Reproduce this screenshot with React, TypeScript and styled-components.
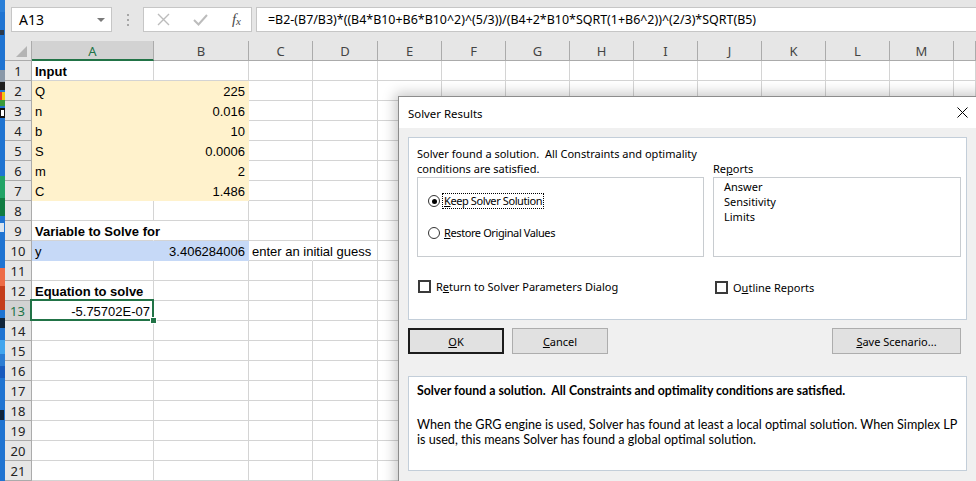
import React from "react";
import styled, { createGlobalStyle } from "styled-components";

const GlobalStyle = createGlobalStyle`
  html, body {
    margin: 0;
    padding: 0;
    width: 976px;
    height: 481px;
    overflow: hidden;
    background: #ffffff;
  }
  #root {
    width: 976px;
    height: 481px;
  }
`;

const GREEN = "#217346";
const YELLOW = "#fff2cc";
const BLUE = "#c6d9f7";
const GRID = "#d4d4d4";

const COLS = ["A", "B", "C", "D", "E", "F", "G", "H", "I", "J", "K", "L", "M", "N"];
const ROWS = Array.from({ length: 21 }, (_, i) => i + 1);

interface CellData {
  text?: string;
  bold?: boolean;
  right?: boolean;
  fill?: string;
  overflow?: boolean;
  selected?: boolean;
}

const cells: Record<string, CellData> = {
  A1: { text: "Input", bold: true },
  A2: { text: "Q", fill: YELLOW },
  B2: { text: "225", right: true, fill: YELLOW },
  A3: { text: "n", fill: YELLOW },
  B3: { text: "0.016", right: true, fill: YELLOW },
  A4: { text: "b", fill: YELLOW },
  B4: { text: "10", right: true, fill: YELLOW },
  A5: { text: "S", fill: YELLOW },
  B5: { text: "0.0006", right: true, fill: YELLOW },
  A6: { text: "m", fill: YELLOW },
  B6: { text: "2", right: true, fill: YELLOW },
  A7: { text: "C", fill: YELLOW },
  B7: { text: "1.486", right: true, fill: YELLOW },
  A9: { text: "Variable to Solve for", bold: true, overflow: true },
  A10: { text: "y", fill: BLUE },
  B10: { text: "3.406284006", right: true, fill: BLUE },
  C10: { text: "enter an initial guess", overflow: true },
  A12: { text: "Equation to solve", bold: true },
  A13: { text: "-5.75702E-07", right: true, selected: true },
};

const Page = styled.div`
  position: relative;
  display: flex;
  width: 976px;
  height: 481px;
  overflow: hidden;
`;

const Desktop = styled.svg`
  flex: 0 0 5px;
  display: block;
`;

const ExcelWindow = styled.div`
  flex: 1;
  display: flex;
  flex-direction: column;
  background: #ffffff;
  min-width: 0;
`;

const Toolbar = styled.div`
  height: 41px;
  flex: 0 0 41px;
  box-sizing: border-box;
  background: #e6e6e6;
  display: flex;
  align-items: flex-start;
  padding: 7px 0 0 6px;
`;

const InputBox = styled.div<{ $width?: number }>`
  box-sizing: border-box;
  height: 25px;
  ${(p) => (p.$width ? `width: ${p.$width}px;` : "flex: 1;")}
  background: #ffffff;
  border: 1px solid #c6c6c6;
  display: flex;
  align-items: center;
  font-family: "Noto Sans", "Open Sans", sans-serif;
  color: #000;
  white-space: nowrap;
  overflow: hidden;
`;

const NameText = styled.span`
  font-size: 14px;
  padding-left: 7px;
  flex: 1;
`;

const DropArrow = styled.span`
  width: 0;
  height: 0;
  border-left: 4px solid transparent;
  border-right: 4px solid transparent;
  border-top: 4px solid #7a7a7a;
  margin-right: 6px;
`;

const Grip = styled.div`
  width: 31px;
  height: 25px;
  display: flex;
  flex-direction: column;
  align-items: center;
  justify-content: center;
  gap: 3px;
  & > span {
    width: 2px;
    height: 2px;
    background: #a6a6a6;
  }
`;

const FxGroup = styled(InputBox)`
  justify-content: space-between;
  padding: 0 10px 0 13px;
`;

const FxText = styled.span`
  font-family: "Liberation Serif", "DejaVu Serif", serif;
  font-style: italic;
  font-size: 15px;
  color: #4a4a4a;
  & > sub {
    font-size: 11px;
    vertical-align: -1px;
  }
`;

const FormulaBox = styled(InputBox)`
  margin-left: 4px;
  padding-left: 11px;
  font-size: 12.45px;
  border-right: none;
`;

const Sheet = styled.div`
  flex: 1;
  display: grid;
  grid-template-columns: 27px 122px 95px 64px 65px repeat(9, 64px) 1fr;
  grid-template-rows: 20px;
  grid-auto-rows: 20px;
  background: #ffffff;
  font-family: "Liberation Sans", Arial, sans-serif;
  font-size: 13px;
`;

const Corner = styled.div`
  box-sizing: border-box;
  background: #e6e6e6;
  border-right: 1px solid #ababab;
  border-bottom: 1px solid #ababab;
  display: flex;
  align-items: flex-end;
  justify-content: flex-end;
  padding: 0 4px 3px 0;
`;

const ColHead = styled.div<{ $active?: boolean }>`
  box-sizing: border-box;
  background: ${(p) => (p.$active ? "#d2d2d2" : "#e6e6e6")};
  border-right: 1px solid #ababab;
  border-bottom: ${(p) => (p.$active ? `2px solid ${GREEN}` : "1px solid #ababab")};
  color: ${(p) => (p.$active ? GREEN : "#444444")};
  font-family: "Noto Sans", "Open Sans", sans-serif;
  font-size: 13px;
  display: flex;
  align-items: center;
  justify-content: center;
  padding-top: ${(p) => (p.$active ? "1px" : "0")};
`;

const RowHead = styled.div<{ $active?: boolean }>`
  box-sizing: border-box;
  background: ${(p) => (p.$active ? "#d2d2d2" : "#e6e6e6")};
  border-right: ${(p) => (p.$active ? `2px solid ${GREEN}` : "1px solid #ababab")};
  border-bottom: 1px solid #ababab;
  color: ${(p) => (p.$active ? GREEN : "#222222")};
  font-family: "Noto Sans", "Open Sans", sans-serif;
  font-size: 13px;
  display: flex;
  align-items: center;
  justify-content: center;
`;

const Cell = styled.div<{
  $fill?: string;
  $bold?: boolean;
  $right?: boolean;
  $overflow?: boolean;
  $selected?: boolean;
}>`
  box-sizing: border-box;
  position: relative;
  background: ${(p) => p.$fill ?? "transparent"};
  border-right: 1px solid
    ${(p) => (p.$overflow ? "transparent" : p.$fill ?? GRID)};
  border-bottom: 1px solid ${(p) => p.$fill ?? GRID};
  font-weight: ${(p) => (p.$bold ? 700 : 400)};
  text-align: ${(p) => (p.$right ? "right" : "left")};
  padding: 0 3px;
  line-height: 21px;
  white-space: nowrap;
  overflow: ${(p) => (p.$overflow || p.$selected ? "visible" : "hidden")};
  z-index: ${(p) => (p.$selected ? 2 : p.$overflow ? 1 : "auto")};
  color: #000;
`;

const Selection = styled.div`
  position: absolute;
  left: -2px;
  top: -2px;
  right: -1px;
  bottom: -1px;
  border: 2px solid ${GREEN};
  pointer-events: none;
  &::after {
    content: "";
    position: absolute;
    right: -5px;
    bottom: -5px;
    width: 5px;
    height: 5px;
    background: ${GREEN};
    border: 1px solid #fff;
  }
`;

const Dialog = styled.div`
  position: absolute;
  left: 398px;
  top: 96px;
  width: 582px;
  height: 400px;
  box-sizing: border-box;
  border: 1px solid #8c8c8c;
  background: #f0f0f0;
  box-shadow: 0 0 12px 3px rgba(0, 0, 0, 0.22);
  display: flex;
  flex-direction: column;
  z-index: 5;
  font-family: "Noto Sans", "Open Sans", sans-serif;
  font-size: 11px;
  color: #000;
`;

const TitleBar = styled.div`
  height: 31px;
  flex: 0 0 31px;
  background: #ffffff;
  display: flex;
  align-items: center;
  justify-content: space-between;
  padding: 0 11px 0 9px;
`;

const TitleText = styled.span`
  font-size: 11.4px;
  padding-top: 1px;
`;

const DialogBody = styled.div`
  display: flex;
  flex-direction: column;
  padding: 9px 12px 0 9px;
`;

const ResultPanel = styled.div`
  box-sizing: border-box;
  height: 183px;
  background: #ffffff;
  border: 1px solid #c3ced9;
  padding: 8px 6px 0 8px;
`;

const PanelGrid = styled.div`
  display: grid;
  grid-template-columns: 287px 248px;
  column-gap: 9px;
`;

const Message = styled.div`
  line-height: 15px;
`;

const ReportsLabel = styled.div`
  align-self: end;
  line-height: 15px;
`;

const GroupBox = styled.div<{ $list?: boolean }>`
  box-sizing: border-box;
  height: 80px;
  margin-top: 1px;
  border: 1px solid #c8ccd0;
  background: #ffffff;
  display: flex;
  flex-direction: column;
  padding: ${(p) => (p.$list ? "1px 0 0 10px" : "15px 0 0 10px")};
  line-height: 15px;
`;

const RadioRow = styled.div<{ $gap?: number }>`
  display: flex;
  align-items: center;
  gap: 2px;
  height: 16px;
  margin-top: ${(p) => p.$gap ?? 0}px;
`;

const Radio = styled.span<{ $checked?: boolean }>`
  box-sizing: border-box;
  width: 12px;
  height: 12px;
  border-radius: 50%;
  border: 1px solid #333333;
  display: flex;
  align-items: center;
  justify-content: center;
  &::after {
    content: "";
    width: 5px;
    height: 5px;
    border-radius: 50%;
    background: ${(p) => (p.$checked ? "#000" : "transparent")};
  }
`;

const FocusLabel = styled.span<{ $focused?: boolean }>`
  border: 1px dotted ${(p) => (p.$focused ? "#000" : "transparent")};
  padding: 0 1px;
  line-height: 14px;
  letter-spacing: -0.4px;
`;

const CheckRow = styled.div<{ $top: number; $left: number }>`
  display: flex;
  align-items: center;
  gap: 5px;
  margin-top: ${(p) => p.$top}px;
  padding-left: ${(p) => p.$left}px;
  line-height: 15px;
`;

const CheckBox = styled.span`
  box-sizing: border-box;
  width: 13px;
  height: 13px;
  border: 2px solid #3a3a3a;
  background: #fff;
`;

const ButtonRow = styled.div`
  display: flex;
  gap: 8px;
  margin-top: 8px;
  padding-right: 6px;
`;

const Button = styled.div<{ $width: number; $default?: boolean }>`
  box-sizing: border-box;
  width: ${(p) => p.$width}px;
  height: 26px;
  background: #e1e1e1;
  border: ${(p) => (p.$default ? "2px solid #1c1c1c" : "1px solid #adadad")};
  display: flex;
  align-items: center;
  justify-content: center;
  &:last-child {
    margin-left: auto;
  }
`;

const InfoBox = styled.div`
  box-sizing: border-box;
  height: 95px;
  margin-top: 22px;
  background: #ffffff;
  border: 1px solid #c3ced9;
  padding: 6px 8px 0 8px;
  font-family: Lato, "Noto Sans", sans-serif;
  font-size: 12.6px;
  line-height: 15px;
`;

const InfoHead = styled.div`
  font-weight: 700;
  font-size: 12.3px;
`;

const InfoText = styled.div`
  margin-top: 19px;
`;

const DesktopStrip = () => (
  <Desktop width="5" height="481" viewBox="0 0 5 481">
    <rect x="0" y="0" width="5" height="481" fill="#1f74d2" />
    <rect x="0" y="0" width="5" height="12" fill="#2a7fd8" />
    <rect x="0" y="30" width="4" height="5" fill="#2b3a4c" />
    <rect x="0" y="70" width="5" height="12" fill="#8a98a8" />
    <rect x="0" y="82" width="5" height="8" fill="#1e1e1e" />
    <rect x="0" y="92" width="3" height="8" fill="#e8382c" />
    <rect x="2" y="92" width="3" height="8" fill="#f2c811" />
    <rect x="0" y="100" width="5" height="6" fill="#3a9b3a" />
    <rect x="0" y="108" width="5" height="10" fill="#111111" />
    <rect x="1" y="110" width="3" height="6" fill="#ffffff" />
    <rect x="0" y="176" width="5" height="22" fill="#21a366" />
    <rect x="0" y="198" width="5" height="18" fill="#107c41" />
    <rect x="0" y="223" width="4" height="9" fill="#d8e4f0" />
    <rect x="0" y="268" width="5" height="18" fill="#ed6c47" />
    <rect x="0" y="286" width="5" height="24" fill="#c43e1c" />
    <rect x="0" y="318" width="5" height="10" fill="#10243a" />
    <rect x="0" y="340" width="5" height="14" fill="#41a5ee" />
    <rect x="0" y="354" width="5" height="12" fill="#2b7cd3" />
    <rect x="0" y="366" width="5" height="12" fill="#185abd" />
    <rect x="0" y="410" width="4" height="10" fill="#10243a" />
  </Desktop>
);

const CloseIcon = () => (
  <svg width="11" height="11" viewBox="0 0 11 11">
    <path d="M0.5 0.5 L10.5 10.5 M10.5 0.5 L0.5 10.5" stroke="#000" strokeWidth="1" />
  </svg>
);

const CancelGlyph = () => (
  <svg width="13" height="13" viewBox="0 0 13 13">
    <path d="M1 1 L12 12 M12 1 L1 12" stroke="#bcbcbc" strokeWidth="1.4" />
  </svg>
);

const CheckGlyph = () => (
  <svg width="15" height="13" viewBox="0 0 15 13">
    <path d="M1 7 L5.5 11.5 L14 2" stroke="#bcbcbc" strokeWidth="2" fill="none" />
  </svg>
);

const CornerTriangle = () => (
  <svg width="11" height="11" viewBox="0 0 11 11">
    <path d="M11 0 L11 11 L0 11 Z" fill="#b4b4b4" />
  </svg>
);

export default function App() {
  return (
    <>
      <GlobalStyle />
      <Page>
        <DesktopStrip />
        <ExcelWindow>
          <Toolbar>
            <InputBox $width={101}>
              <NameText>A13</NameText>
              <DropArrow />
            </InputBox>
            <Grip>
              <span />
              <span />
              <span />
            </Grip>
            <FxGroup $width={109}>
              <CancelGlyph />
              <CheckGlyph />
              <FxText>
                f<sub>x</sub>
              </FxText>
            </FxGroup>
            <FormulaBox>
              =B2-(B7/B3)*((B4*B10+B6*B10^2)^(5/3))/(B4+2*B10*SQRT(1+B6^2))^(2/3)*SQRT(B5)
            </FormulaBox>
          </Toolbar>
          <Sheet>
            <Corner>
              <CornerTriangle />
            </Corner>
            {COLS.map((c) => (
              <ColHead key={c} $active={c === "A"}>
                {c === "N" ? "" : c}
              </ColHead>
            ))}
            {ROWS.map((r) => (
              <React.Fragment key={r}>
                <RowHead $active={r === 13}>{r}</RowHead>
                {COLS.map((c) => {
                  const d = cells[`${c}${r}`] ?? {};
                  return (
                    <Cell
                      key={`${c}${r}`}
                      $fill={d.fill}
                      $bold={d.bold}
                      $right={d.right}
                      $overflow={d.overflow}
                      $selected={d.selected}
                    >
                      {d.text}
                      {d.selected && <Selection />}
                    </Cell>
                  );
                })}
              </React.Fragment>
            ))}
          </Sheet>
        </ExcelWindow>

        <Dialog>
          <TitleBar>
            <TitleText>Solver Results</TitleText>
            <CloseIcon />
          </TitleBar>
          <DialogBody>
            <ResultPanel>
              <PanelGrid>
                <Message>
                  Solver found a solution.{"\u00a0 "}All Constraints and optimality
                  <br />
                  conditions are satisfied.
                </Message>
                <ReportsLabel>
                  Re<u>p</u>orts
                </ReportsLabel>
                <GroupBox>
                  <RadioRow>
                    <Radio $checked />
                    <FocusLabel $focused>
                      <u>K</u>eep Solver Solution
                    </FocusLabel>
                  </RadioRow>
                  <RadioRow $gap={16}>
                    <Radio />
                    <FocusLabel>
                      <u>R</u>estore Original Values
                    </FocusLabel>
                  </RadioRow>
                </GroupBox>
                <GroupBox $list>
                  <div>Answer</div>
                  <div>Sensitivity</div>
                  <div>Limits</div>
                </GroupBox>
                <CheckRow $top={20} $left={1}>
                  <CheckBox />
                  <span>
                    R<u>e</u>turn to Solver Parameters Dialog
                  </span>
                </CheckRow>
                <CheckRow $top={23} $left={2}>
                  <CheckBox />
                  <span>
                    O<u>u</u>tline Reports
                  </span>
                </CheckRow>
              </PanelGrid>
            </ResultPanel>
            <ButtonRow>
              <Button $width={96} $default>
                <span>
                  <u>O</u>K
                </span>
              </Button>
              <Button $width={96}>
                <span>
                  <u>C</u>ancel
                </span>
              </Button>
              <Button $width={129}>
                <span>
                  <u>S</u>ave Scenario...
                </span>
              </Button>
            </ButtonRow>
            <InfoBox>
              <InfoHead>
                Solver found a solution.{"\u00a0 "}All Constraints and optimality conditions are
                satisfied.
              </InfoHead>
              <InfoText>
                When the GRG engine is used, Solver has found at least a local optimal solution.
                When Simplex LP is used, this means Solver has found a global optimal solution.
              </InfoText>
            </InfoBox>
          </DialogBody>
        </Dialog>
      </Page>
    </>
  );
}
